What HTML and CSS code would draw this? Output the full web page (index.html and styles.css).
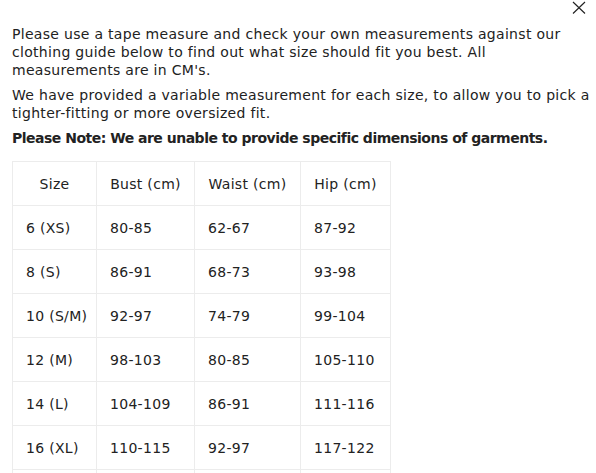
FILE: index.html
```html
<!DOCTYPE html>
<html lang="en">
<head>
<meta charset="utf-8">
<title>Size guide</title>
<link rel="stylesheet" href="styles.css">
</head>
<body>
<div class="modal">
  <button class="close" aria-label="Close">
    <svg width="14" height="14" viewBox="0 0 14 14"><path d="M1 1L13 12.5M13 1L1 12.5" stroke="#222" stroke-width="1.15" fill="none"/></svg>
  </button>
  <p class="intro">Please use a tape measure and check your own measurements against our clothing guide below to find out what size should fit you best. All measurements are in CM's.</p>
  <p class="intro">We have provided a variable measurement for each size, to allow you to pick a tighter-fitting or more oversized fit.</p>
  <p class="note">Please Note: We are unable to provide specific dimensions of garments.</p>
  <table class="sizes">
    <colgroup>
      <col class="c1"><col class="c2"><col class="c3"><col class="c4">
    </colgroup>
    <thead>
      <tr><th>Size</th><th>Bust (cm)</th><th>Waist (cm)</th><th>Hip (cm)</th></tr>
    </thead>
    <tbody>
      <tr><td>6 (XS)</td><td>80-85</td><td>62-67</td><td>87-92</td></tr>
      <tr><td>8 (S)</td><td>86-91</td><td>68-73</td><td>93-98</td></tr>
      <tr><td>10 (S/M)</td><td>92-97</td><td>74-79</td><td>99-104</td></tr>
      <tr><td>12 (M)</td><td>98-103</td><td>80-85</td><td>105-110</td></tr>
      <tr><td>14 (L)</td><td>104-109</td><td>86-91</td><td>111-116</td></tr>
      <tr><td>16 (XL)</td><td>110-115</td><td>92-97</td><td>117-122</td></tr>
      <tr class="more" aria-hidden="true"><td></td><td></td><td></td><td></td></tr>
    </tbody>
  </table>
</div>
</body>
</html>
```
FILE: styles.css
```css
html, body {
  margin: 0;
  padding: 0;
  background: #fff;
}
body {
  font-family: "DejaVu Sans", sans-serif;
  font-size: 14px;
  line-height: 18px;
  color: #222;
  letter-spacing: 0.3px;
  overflow: hidden;
  height: 473px;
}
.modal {
  position: relative;
  width: 578px;
  padding: 25px 6px 0 12px;
}
.close {
  position: absolute;
  top: 1px;
  right: 10px;
  width: 14px;
  height: 14px;
  padding: 0;
  border: 0;
  background: none;
  cursor: pointer;
}
.close svg { display: block; }
.intro {
  margin: 0 0 7px;
}
.note {
  margin: 0 0 14px;
  font-weight: bold;
  letter-spacing: -0.5px;
}
.sizes {
  border-collapse: collapse;
  table-layout: fixed;
  width: 378px;
}
.c1 { width: 84px; }
.c2 { width: 98px; }
.c3 { width: 106px; }
.c4 { width: 90px; }
.sizes th,
.sizes td {
  border: 1px solid #ececec;
  padding: 13px 0 12px 13px;
  text-align: left;
  font-weight: normal;
  white-space: nowrap;
}
.sizes th {
  text-align: center;
  padding-left: 0;
}
.sizes .more td {
  height: 18px;
}
```
